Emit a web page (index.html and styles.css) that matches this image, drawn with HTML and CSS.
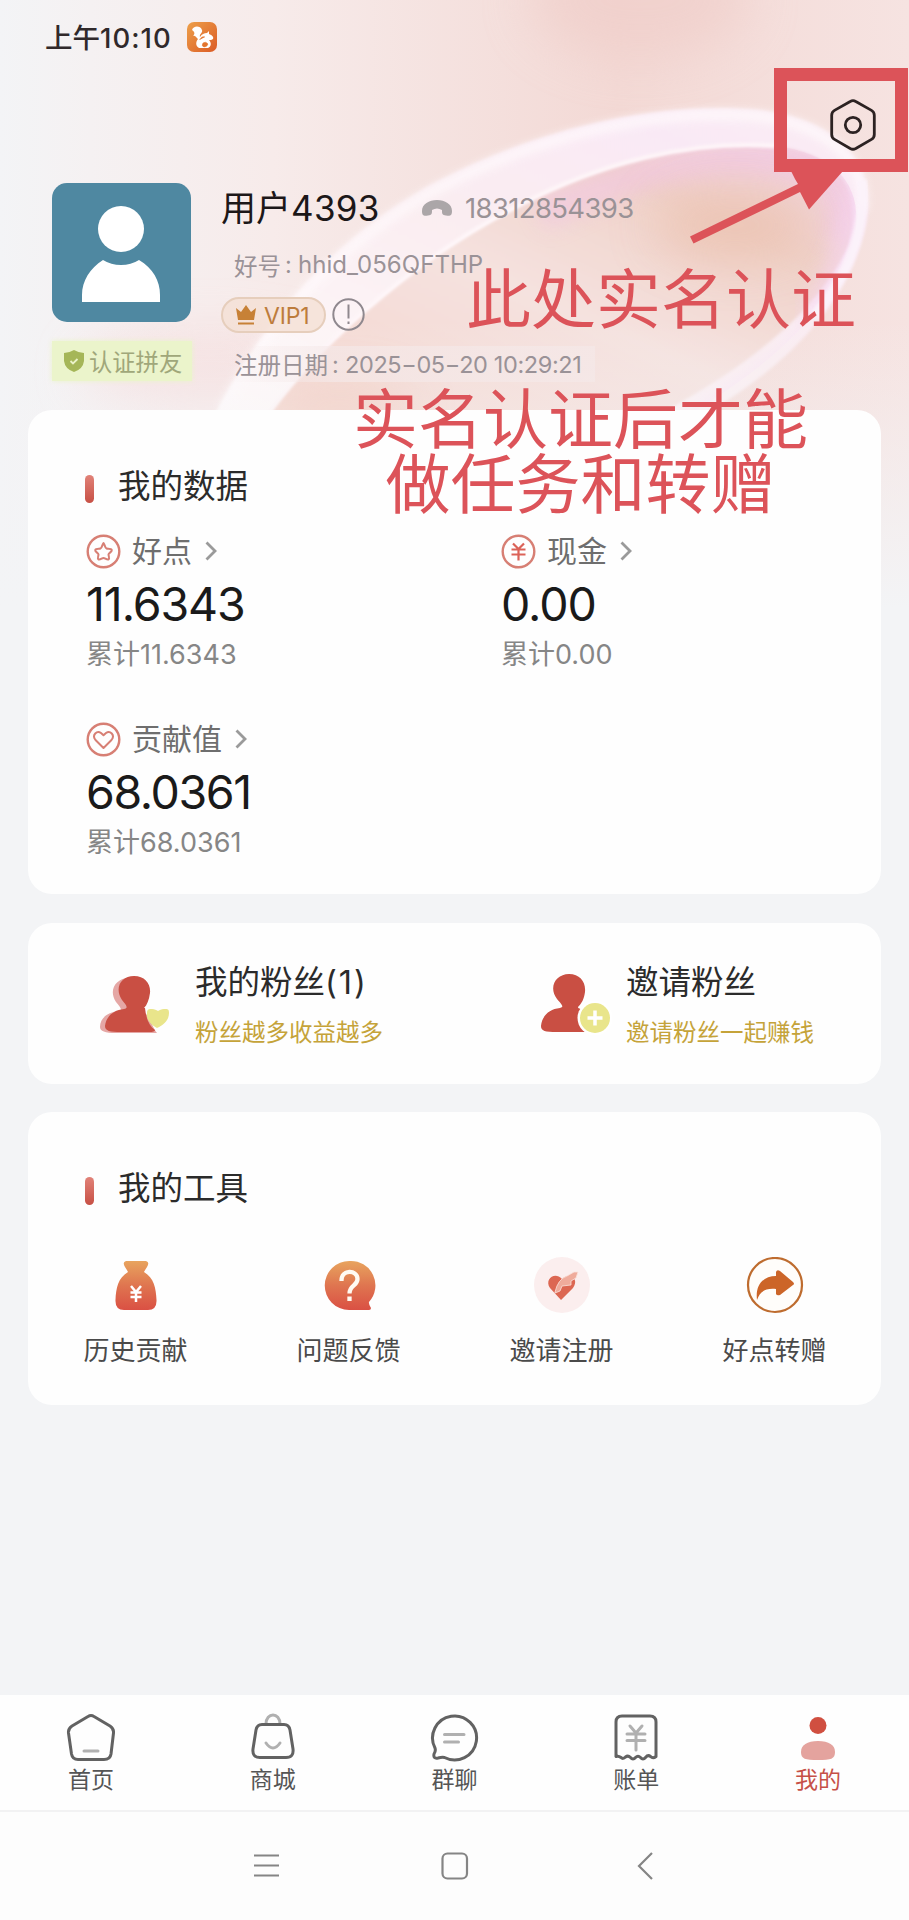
FILE: index.html
```html
<!DOCTYPE html>
<html lang="zh-CN">
<head>
<meta charset="utf-8">
<title>我的</title>
<link rel="stylesheet" href="styles.css">
</head>
<body>
<div class="screen">
  <svg class="backdrop" viewBox="0 0 909 640" width="909" height="640" aria-hidden="true">
    <defs>
      <linearGradient id="wash" x1="0" y1="0" x2="1" y2="0">
        <stop offset="0" stop-color="#f3f4f6"/><stop offset=".1" stop-color="#f5f1f2"/>
        <stop offset=".3" stop-color="#f7ebea"/><stop offset=".68" stop-color="#f3d9d5"/>
        <stop offset="1" stop-color="#f6e3e1"/>
      </linearGradient>
      <linearGradient id="fade" x1="0" y1="0" x2="0" y2="1">
        <stop offset=".5" stop-color="#f3f4f6" stop-opacity="0"/><stop offset=".95" stop-color="#f3f4f6"/>
      </linearGradient>
      <linearGradient id="petal" x1="0" y1="1" x2="1" y2="0">
        <stop offset="0" stop-color="#f5d5cd"/><stop offset=".45" stop-color="#f5e2df"/>
        <stop offset=".75" stop-color="#f0d2c9"/><stop offset="1" stop-color="#f4d6e9"/>
      </linearGradient>
      <linearGradient id="rim" x1="0" y1="1" x2="1" y2="0">
        <stop offset="0" stop-color="#fffafa"/><stop offset=".5" stop-color="#faedf1"/>
        <stop offset=".8" stop-color="#f9e9f5"/><stop offset="1" stop-color="#faedf3"/>
      </linearGradient>
      <filter id="b2"><feGaussianBlur stdDeviation="1.8"/></filter>
      <filter id="b4"><feGaussianBlur stdDeviation="4"/></filter>
      <filter id="b8" x="-30%" y="-30%" width="160%" height="160%"><feGaussianBlur stdDeviation="10"/></filter>
      <filter id="b20" x="-50%" y="-100%" width="200%" height="300%"><feGaussianBlur stdDeviation="24"/></filter>
      <clipPath id="inner"><path d="M268 414C330 330 430 250 520 205C600 163 690 140 775 146C850 155 868 200 850 255C820 320 770 365 690 414Z"/></clipPath>
    </defs>
    <rect width="909" height="640" fill="url(#wash)"/>
    <ellipse cx="640" cy="0" rx="110" ry="60" fill="#efcbc6" opacity=".55" filter="url(#b20)"/>
    <ellipse cx="210" cy="370" rx="130" ry="40" fill="#f6dcdc" opacity=".7" filter="url(#b20)"/>
    <path d="M215 414C270 310 340 235 430 185C530 132 650 100 760 110C840 120 878 165 866 225C850 300 790 365 705 414Z" fill="url(#rim)" filter="url(#b2)"/>
    <path d="M222 410C275 312 345 240 435 190C535 137 650 108 755 116C825 123 868 160 862 210" fill="none" stroke="#fffafc" stroke-width="10" opacity=".8" filter="url(#b4)"/>
    <path d="M268 414C330 330 430 250 520 205C600 163 690 140 775 146C850 155 860 200 848 245C820 310 750 365 660 414Z" fill="url(#petal)" filter="url(#b2)"/>
    <g clip-path="url(#inner)">
      <path d="M540 215C620 175 710 150 800 165C850 185 850 210 835 240" fill="none" stroke="#f2c6e3" stroke-width="32" opacity=".6" filter="url(#b8)"/>
      <ellipse cx="735" cy="225" rx="80" ry="35" fill="#ebc1af" opacity=".75" filter="url(#b20)"/>
      <path d="M858 180Q850 260 810 320" fill="none" stroke="#f6d5f1" stroke-width="22" opacity=".7" filter="url(#b8)"/>
      <path d="M850 300Q790 370 700 420" fill="none" stroke="#f8e0f5" stroke-width="18" filter="url(#b8)"/>
      <ellipse cx="340" cy="410" rx="70" ry="25" fill="#f1bfae" opacity=".6" filter="url(#b20)"/>
    </g>
    <path d="M268 414C330 330 430 250 520 205C600 163 690 140 775 146" fill="none" stroke="#fff8fb" stroke-width="4" filter="url(#b2)"/>
    <path d="M862 180Q868 250 815 315" fill="none" stroke="#fcf3fb" stroke-width="10" opacity=".9" filter="url(#b2)"/>
    <rect width="909" height="640" fill="url(#fade)"/>
  </svg>

  <header class="status">
    <span class="clock">上午<span class="time">10:10</span></span>
    <svg width="30" height="30" viewBox="0 0 30 30"><defs><linearGradient id="uc" x1="0" y1="0" x2="1" y2="1"><stop stop-color="#eda04a"/><stop offset="1" stop-color="#db5b25"/></linearGradient></defs><rect width="30" height="30" rx="7" fill="url(#uc)"/><path d="M5 8C6 4 13 3 15 8C16 11 12 12 13 15C15 12 17 11 20 11L22 9L22 12C25 13 27 15 26 17C25 18 23 18 22 18C25 21 24 25 21 26H12C8 24 9 19 11 17C9 16 9 13 6 14C8 12 8 10 5 8Z" fill="#fff"/><path d="M12.500 18C14 15 16 14 18 15M16 21Q19 19 21 22Q20 25 17 25Q14 24 16 21Z" fill="#e3752e" stroke="#e3752e" stroke-width=".5"/></svg>
  </header>

  <div class="topbar">
    <svg class="gear" width="50" height="54" viewBox="0 0 50 54" fill="none" stroke="#2c2222" stroke-width="2.800"><path d="M22.200 3.500Q25 1.800 27.800 3.500L43.500 12.400Q46.300 14 46.300 17.300V36.500Q46.300 39.700 43.500 41.400L27.800 50.500Q25 52 22.200 50.500L6.500 41.400Q3.700 39.700 3.700 36.500V17.300Q3.700 14 6.500 12.400Z"/><circle cx="25" cy="27" r="7.700"/></svg>
  </div>

  <section class="profile">
    <div class="portrait">
      <svg class="avatar" width="139" height="139" viewBox="0 0 139 139"><rect width="139" height="139" rx="15" fill="#4f88a1"/><circle cx="69" cy="46" r="23" fill="#fff"/><path d="M30 119V112C30 98 38 85 51 77Q59 82 69 82Q79 82 87 77C101 85 108 98 108 112V119Z" fill="#fff"/></svg>
      <div class="badge"><svg width="22" height="24" viewBox="0 0 22 24"><path d="M11 1Q16 4 21 4V12Q20 20 11 23Q2 20 1 12V4Q6 4 11 1Z" fill="#a5b658"/><path d="M7.500 12L10 14.500L14.500 10" fill="none" stroke="#eaf2c8" stroke-width="1.800"/></svg><span>认证拼友</span></div>
    </div>
    <div class="identity">
      <div class="name-row">
        <span class="name">用户<span class="num">4393</span></span>
        <svg width="32" height="18" viewBox="0 0 32 18"><path d="M1 12C1 5 8 1 16 1C24 1 31 5 31 12C31 17 29 17 25 16.500C21 16 21 15 21 11Q16 8 11 11C11 15 11 16 7 16.500C3 17 1 17 1 12Z" fill="#aba6a8"/></svg>
        <span class="phone">18312854393</span>
      </div>
      <div class="account">好号<span class="colon">:</span><span class="hhid">hhid_056QFTHP</span></div>
      <div class="level">
        <span class="vip"><svg width="22" height="20" viewBox="0 0 22 20" fill="#c78136"><path d="M1 3L6 7L11 0L16 7L21 3L19 15H3Z"/><path d="M3 17.500H19V19.500H3Z"/></svg><span>VIP1</span></span>
        <svg width="33" height="33" viewBox="0 0 33 33" fill="none" stroke="#8f888e" stroke-width="2"><circle cx="16.500" cy="16.500" r="15.200"/><path d="M16.500 6.500V20.500M16.500 23.500V26"/></svg>
      </div>
      <div class="joined">注册日期<span class="colon">:</span><span class="date">2025−05−20 10:29:21</span></div>
    </div>
  </section>

  <main class="cards">
    <section class="card data">
      <h2>我的数据</h2>
      <div class="stats">
        <div class="stat">
          <div class="label"><svg width="35" height="35" viewBox="0 0 35 35" fill="none" stroke="#d77f74"><circle cx="17.500" cy="17.500" r="15.800" stroke-width="2.400"/><path stroke-width="2" stroke-linejoin="round" d="M17.500 9C19 11 19 14 20.500 14.500C22 15 25 14 25.800 16C26 18 22.500 19 22.500 20.500C22.500 22 24 24.500 22.500 25.500C20.500 26 19 24 17.500 24C16 24 14.500 26 12.500 25.500C11 24.500 12.500 22 12.500 20.500C12.500 19 9 18 9.200 16C10 14 13 15 14.500 14.500C16 14 16 11 17.500 9Z"/></svg><span>好点</span><svg class="chev" width="12" height="20" viewBox="0 0 12 20"><path d="M1.500 1.500L10 10L1.500 18.500"/></svg></div>
          <div class="value">11.6343</div>
          <div class="total">累计<span class="sum">11.6343</span></div>
        </div>
        <div class="stat">
          <div class="label"><svg width="35" height="35" viewBox="0 0 35 35" fill="none" stroke="#d77f74"><circle cx="17.500" cy="17.500" r="15.800" stroke-width="2.400"/><path stroke="#db6258" stroke-width="2.200" d="M12 9.500L17.500 15L23 9.500M10.500 15.500H24.500M10.500 20.500H24.500M17.500 15V26.500"/></svg><span>现金</span><svg class="chev" width="12" height="20" viewBox="0 0 12 20"><path d="M1.500 1.500L10 10L1.500 18.500"/></svg></div>
          <div class="value zero">0.00</div>
          <div class="total">累计<span class="sum">0.00</span></div>
        </div>
        <div class="stat">
          <div class="label"><svg width="35" height="35" viewBox="0 0 35 35" fill="none" stroke="#d77f74"><circle cx="17.500" cy="17.500" r="15.800" stroke-width="2.400"/><path stroke-width="2" stroke-linejoin="round" d="M17.500 26L9.500 18C5.500 13 11 8 15 11L17.500 13.300L20 11C24 8 29.500 13 25.500 18Z"/></svg><span>贡献值</span><svg class="chev" width="12" height="20" viewBox="0 0 12 20"><path d="M1.500 1.500L10 10L1.500 18.500"/></svg></div>
          <div class="value wide">68.0361</div>
          <div class="total">累计<span class="sum">68.0361</span></div>
        </div>
      </div>
    </section>

    <section class="card fans">
      <div class="fan">
        <svg width="72" height="62" viewBox="0 0 72 62"><path d="M30 4C41 4 46 12 45 21C44 28 41 33 37 36H40C50 37 52 52 58 59H17C6 59 1 57 1 53C1 44 9 38 20 37C24 36 21 33 17 28C9 16 17 4 30 4Z" fill="#e5a7a5"/><path d="M35 2C46 2 52 10 51 19C50 26 48 31 45 34H46C47 44 50 52 56 56Q56 58 50 58H22C11 58 6 57 6 52C7 43 14 36 25 35C30 34 27 31 23 26C15 14 22 2 35 2Z" fill="#c94f43"/><path d="M58 54C51 50 47 45 48 39C48 35 50 35 53 35C56 35 57 36 59 37C61 36 62 35 65 35C69 35 70 35 70 39C70 46 65 51 58 54Z" fill="#e9e58b"/></svg>
        <div class="fan-text"><h3>我的粉丝<span class="paren">(1)</span></h3><p>粉丝越多收益越多</p></div>
      </div>
      <div class="fan">
        <svg width="72" height="62" viewBox="0 0 72 62"><path d="M29 0C40 0 46 8 45 18C44 25 42 29 38 33C38 35 42 35 46 36V56Q46 58 42 58H17C5 58 1 57 1 52C2 42 9 35 20 34C25 33 21 30 17 25C8 13 16 0 29 0Z" fill="#c94f43"/><circle cx="55" cy="44" r="17.500" fill="#fff"/><circle cx="55" cy="44" r="15" fill="#e9e58b"/><path d="M47.500 44H62.500M55 36.500V51.500" stroke="#fff" stroke-width="3.500"/></svg>
        <div class="fan-text"><h3>邀请粉丝</h3><p>邀请粉丝一起赚钱</p></div>
      </div>
    </section>

    <section class="card tools">
      <h2>我的工具</h2>
      <div class="tool-grid">
        <div class="tool"><svg width="58" height="58" viewBox="0 0 58 58"><defs><linearGradient id="warm" x1="0" y1="0" x2="0" y2="1"><stop stop-color="#e8a45e"/><stop offset=".5" stop-color="#df7550"/><stop offset="1" stop-color="#da5044"/></linearGradient></defs><path d="M19 4H39Q43 5 40 10Q38 13 37 15C47 21 49 31 49.500 43Q50 53 41 53H17Q8 53 8.500 43C9 31 11 21 21 15Q20 13 18 10Q15 5 19 4Z" fill="url(#warm)"/><path d="M24 29L29 35L34 29M23.500 35.500H34.500M23.500 40H34.500M29 35V45" fill="none" stroke="#fff" stroke-width="2.500"/></svg><span>历史贡献</span></div>
        <div class="tool"><svg width="58" height="58" viewBox="0 0 58 58"><path d="M29.500 4A24.500 24.500 0 0 1 49 45Q48.500 47 51 51Q51 53 49 53H29A24.500 24.500 0 0 1 29.500 4Z" fill="url(#warm)"/><path d="M21.500 24C21 12 37.500 12.500 37.500 22C37.500 29 29.500 28 29.500 36.500M29.500 39.500V44" fill="none" stroke="#fffaf2" stroke-width="4.300"/></svg><span>问题反馈</span></div>
        <div class="tool"><svg width="58" height="58" viewBox="0 0 58 58"><circle cx="29" cy="28" r="28" fill="#fbeeee"/><path d="M28 43L17 31C11 22 22 14 29 22C36 15 47 21 40 31Z" fill="#dc6752"/><path d="M22 35Q25 22 34 19L41 15L45 15L43 21L38 24L38 28L29 29L27 34L22 36Z" fill="#efab9b" stroke="#fae2dc" stroke-width=".8"/></svg><span>邀请注册</span></div>
        <div class="tool"><svg width="58" height="58" viewBox="0 0 58 58"><circle cx="29" cy="28" r="27" fill="#fffdfa" stroke="#be6c2f" stroke-width="2.200"/><path d="M11 43C9 27 18 19 30 19V15Q31 12 34 14L47 25Q49 27 47 28L34 38Q31 39 30 37V32C20 31 14 34 11 43Z" fill="#cc6528"/></svg><span>好点转赠</span></div>
      </div>
    </section>
  </main>

  <nav class="tabs">
    <div class="tab"><svg width="50" height="50" viewBox="0 0 50 50"><path d="M22 3.500Q25 1.500 28 3.500L44 13Q48 15.500 47.500 20L45 41Q44.200 46.500 38 46.500H12Q6.500 46.500 5.500 41L2.500 20Q2 15.500 6 13Z"/><path class="soft" d="M18 38H32"/></svg><span>首页</span></div>
    <div class="tab"><svg width="50" height="50" viewBox="0 0 50 50"><path class="soft" d="M18 11C18 -1 32 -1 32 11"/><path d="M14 11.500H36Q41 11.500 42 17L45 36Q46 44.500 38 44.500H12Q4 44.500 5 36L8 17Q9 11.500 14 11.500Z"/><path class="soft" d="M18 30Q25 40 32 30"/></svg><span>商城</span></div>
    <div class="tab"><svg width="50" height="50" viewBox="0 0 50 50"><path d="M6 35A22 22 0 1 1 15.500 44.500Q13 44 9 45Q4 46 5 41Q7 38 6 35Z"/><path class="soft" d="M15.500 21.500H35M15.500 29H29.500"/></svg><span>群聊</span></div>
    <div class="tab"><svg width="50" height="50" viewBox="0 0 50 50"><path d="M5 43.500V9Q5 3 11 3H39Q45 3 45 9V43.500Q42 46 39.500 43.500Q37 41.500 34.500 44.500Q32 47.500 29.500 44.500Q27 42 24.500 44.500Q22 47.500 19.500 44.500Q17 42 14.500 44Q12 46.500 10 44.500Q7.500 42.500 5 43.500Z"/><path class="soft" d="M19 13L25 20L31 13M16 21H34M16 27.500H34M25 20V37"/></svg><span>账单</span></div>
    <div class="tab active"><svg width="50" height="50" viewBox="0 0 50 50"><circle cx="25" cy="12.500" r="8.500"/><path d="M25 28C36 28 42 32 42 39C42 46 38 47 25 47C12 47 8 46 8 39C8 32 14 28 25 28Z" class="body"/></svg><span>我的</span></div>
  </nav>
  <footer class="sysnav">
    <svg width="28" height="28" viewBox="0 0 28 28"><path d="M1 3.500H26M1 13.500H26M1 23.500H26"/></svg>
    <svg width="28" height="28" viewBox="0 0 28 28"><rect x="1.500" y="1.500" width="24.500" height="25" rx="5"/></svg>
    <svg width="28" height="28" viewBox="0 0 28 28"><path d="M20 1L7 14L20 27"/></svg>
  </footer>

  <svg class="marker" width="229" height="190" viewBox="680 60 229 190"><rect x="780.500" y="74.500" width="121" height="91" fill="none" stroke="#dc5359" stroke-width="13"/><path d="M690 236.500L798 184L795 179L791 171H843L809 209.500L800 192L693.500 243.500Z" fill="#dc5359"/></svg>
  <div class="note note-one">此处实名认证</div>
  <div class="note note-two">实名认证后才能<br>做任务和转赠</div>
</div>
</body>
</html>
```
FILE: styles.css
```css
* { box-sizing: border-box; margin: 0; padding: 0; }
body { background: #f3f4f6; font-family: Inter, "Noto Sans CJK SC", sans-serif; }
svg { display: block; flex: none; }
h2, h3 { font-weight: 400; }
.screen { position: relative; width: 909px; height: 1920px; overflow: hidden; display: flex; flex-direction: column; color: #2b2b2b; white-space: nowrap; }
.backdrop { position: absolute; left: 0; top: 0; z-index: -1; }

.status { height: 74px; padding-left: 45px; display: flex; align-items: center; gap: 14px; }
.clock { width: 128px; margin-top: -2px; font-size: 27.500px; font-weight: 500; color: #30292b; }
.time { letter-spacing: 1px; }
.topbar { height: 109px; padding: 24px 31px 0 0; display: flex; justify-content: flex-end; }

.profile { height: 227px; padding-left: 52px; display: flex; gap: 29px; }
.portrait { width: 140px; }
.badge { margin-top: 19px; height: 40px; display: flex; align-items: center; gap: 4px; padding-left: 11px; font-size: 23.300px; color: #a0a77a; background: #ebf4cb; box-shadow: 0 0 5px #ebf4cb; }
.identity { flex: 1; }
.name-row { height: 50px; display: flex; align-items: center; }
.name { width: 200px; margin-top: -5px; font-size: 35px; color: #1c1718; }
.name .num { letter-spacing: .3px; }
.phone { margin-left: 12px; font-size: 27.500px; color: #9a9296; letter-spacing: -.65px; }
.account, .joined { padding-left: 13px; font-size: 23.500px; color: #9a9297; display: flex; align-items: center; }
.account { height: 63px; }
.colon { width: 17px; padding-left: 4px; }
.hhid { font-size: 24px; letter-spacing: .05px; }
.level { height: 37px; display: flex; align-items: center; gap: 6px; }
.vip { width: 105px; height: 36px; border: 2px solid #e6cebc; border-radius: 18px; background: #f4e0d4cc; padding-left: 12px; display: flex; align-items: center; gap: 7px; font-size: 23px; color: #bd7c3c; }
.vip span { padding-top: 3px; letter-spacing: -.2px; }
.joined { margin-top: 13px; height: 36px; width: 374px; background: linear-gradient(90deg, #f5e9e900, #f5e9e9aa 30%); }
.date { font-size: 23.500px; letter-spacing: -.38px; }

.cards { padding: 0 28px; display: flex; flex-direction: column; gap: 28.500px; }
.card { background: #fefefe; border-radius: 24px; }
.card h2 { display: flex; align-items: center; gap: 24px; font-size: 32.500px; line-height: 40px; padding-left: 57px; }
.card h2::before { content: ""; width: 9px; height: 28px; margin-top: 3px; border-radius: 5px; background: linear-gradient(#e18278, #c75045); }
.data { height: 484px; padding-top: 57px; }
.stats { display: grid; grid-template-columns: 415px 1fr; grid-auto-rows: 188px; padding: 25px 0 0 58px; }
.label { height: 38px; display: flex; align-items: center; font-size: 30px; color: #6e6e6e; }
.label span { margin: 0 13px 0 11px; line-height: 38px; }
.chev { fill: none; stroke: #9a9a9a; stroke-width: 2.800; }
.value { margin-top: 6px; height: 56px; line-height: 56px; font-size: 46.500px; color: #1a1a1a; letter-spacing: -1.100px; }
.value.wide { letter-spacing: -1.400px; }
.total { margin-top: 1px; height: 44px; line-height: 44px; font-size: 27px; color: #868686; }

.fans { height: 161px; display: flex; padding: 37px 0 0 71px; }
.fan { flex: none; width: 431px; display: flex; gap: 24px; }
.fan > svg { margin-top: 14px; }
.fan:nth-child(2) { padding-left: 10px; gap: 14px; }
.fan-text h3 { font-size: 32.500px; line-height: 46px; }
.paren { letter-spacing: 2px; }
.fan-text p { margin-top: 9px; font-size: 23.500px; line-height: 36px; color: #c5a339; }

.tools { height: 293px; padding-top: 57px; }
.tool-grid { display: grid; grid-template-columns: repeat(4, 1fr); padding: 48px 0 0 1px; }
.tool { display: flex; flex-direction: column; align-items: center; gap: 17px; font-size: 26px; line-height: 38px; color: #4a4a4a; }

.tabs { margin-top: 290px; height: 117px; background: #fefefe; border-bottom: 2px solid #f2f2f3; display: grid; grid-template-columns: repeat(5, 1fr); }
.tab { padding-top: 18px; display: flex; flex-direction: column; align-items: center; font-size: 23px; line-height: 32px; color: #555; }
.tab span { margin-top: 1px; }
.tab svg { fill: none; stroke: #626262; stroke-width: 3; stroke-linecap: round; stroke-linejoin: round; }
.tab .soft { stroke: #b0b0b0; }
.tab.active { color: #c65047; }
.tab.active svg { fill: #d04f40; stroke: none; }
.tab.active .body { fill: #e4a39e; }
.sysnav { flex: 1; background: #fdfdfd; padding: 40px 0 0 253px; display: flex; gap: 160px; }
.sysnav svg { fill: none; stroke: #858585; stroke-width: 2.200; }
.sysnav svg:last-child { margin-left: 3px; }

.marker { position: absolute; left: 680px; top: 60px; }
.note { position: absolute; font-size: 65px; line-height: 65px; color: #dc5359; text-align: center; }
.note-one { left: 466px; top: 267px; }
.note-two { left: 353px; top: 387px; }
```
